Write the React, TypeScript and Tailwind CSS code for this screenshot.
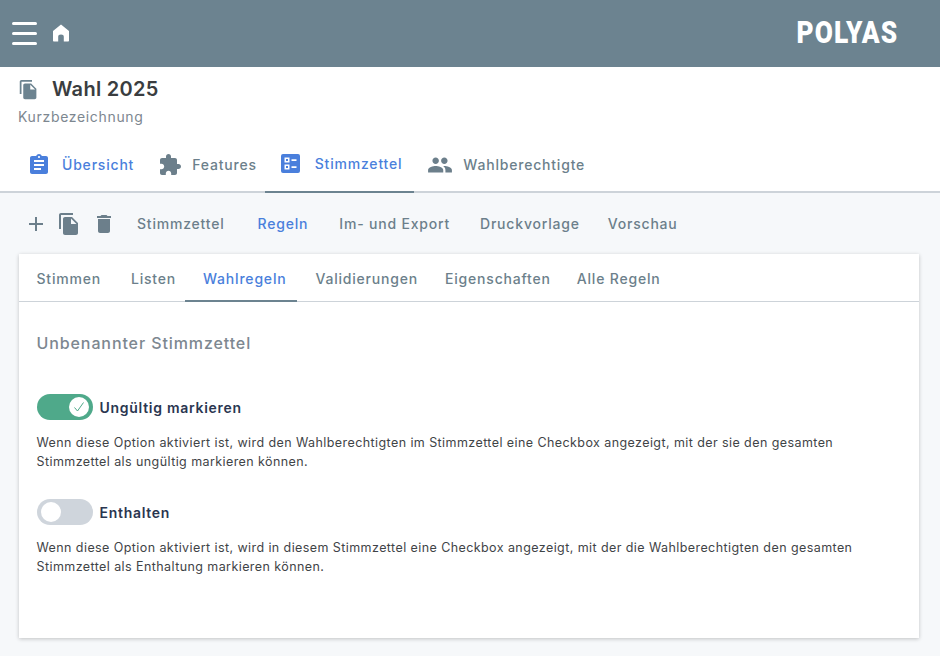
const F = "M16 1H4c-1.1 0-2 .9-2 2v14h2V3h12V1zm-1 4l6 6v10c0 1.1-.9 2-2 2H7.99C6.89 23 6 22.1 6 21l.01-14c0-1.1.89-2 1.99-2h7zm-1 7h5.5L14 6.5V12z";

function I({ d, className }: { d: string; className: string }) {
  return (
    <svg viewBox="0 0 24 24" fill="currentColor" className={className}>
      <path d={d} />
    </svg>
  );
}

function Toggle({ on }: { on: boolean }) {
  return (
    <div className={`flex h-[26px] w-[56px] items-center rounded-full px-[4px] ${on ? "justify-end bg-[#4fa98a]" : "justify-start bg-[#cfd5dc]"}`}>
      <div className="flex h-[20px] w-[20px] items-center justify-center rounded-full bg-white">
        {on && (
          <svg viewBox="0 0 20 20" className="h-[20px] w-[20px]" fill="none" stroke="#4fa98a" strokeWidth="1">
            <path d="M5.5 10.5l3 3.5 6-8.5" />
          </svg>
        )}
      </div>
    </div>
  );
}

function Opt({ on, label, text }: { on: boolean; label: string; text: string }) {
  return (
    <div>
      <div className="flex items-center gap-[7px]">
        <Toggle on={on} />
        <span className="text-[14px] font-semibold tracking-[0.72px] text-[#2a3650]">{label}</span>
      </div>
      <p className="mt-[14px] w-[830px] text-[12.5px] leading-[18.5px] tracking-[0.42px] text-[#3f4447]">{text}</p>
    </div>
  );
}

export default function App() {
  return (
    <div className="flex h-[656px] w-[940px] flex-col overflow-hidden bg-[#f6f8fa] font-['Inter',sans-serif]">
      <header className="flex h-[67px] shrink-0 items-center justify-between bg-[#6c8390] pl-[12px] pr-[42px]">
        <div className="flex items-center gap-[15px]">
          <div className="flex w-[25px] flex-col gap-[7px]">
            <div className="h-[3px] rounded-full bg-white" />
            <div className="h-[3px] rounded-full bg-white" />
            <div className="h-[3px] rounded-full bg-white" />
          </div>
          <svg viewBox="0 0 18 18" fill="white" className="mb-[2px] h-[18px] w-[18px]">
            <path d="M9 .4L1 7v9.6c0 .6.5 1 1 1h4.200v-4.800c0-1.400 1-2.300 2.800-2.300s2.800.9 2.800 2.300v4.800H16c.5 0 1-.4 1-1V7z" />
          </svg>
        </div>
        <span className="mb-[3px] origin-right scale-x-[0.82] font-['Roboto',sans-serif] text-[32px] font-black tracking-[1.5px] text-white">POLYAS</span>
      </header>

      <section className="flex h-[126px] shrink-0 flex-col border-b-2 border-[#cdd3d9] bg-white">
        <div className="flex items-center gap-[13px] pl-[18px] pt-[10px]">
          <I d={F} className="h-[21px] w-[21px] text-[#6c8390]" />
          <h1 className="text-[20px] leading-[24px] font-semibold tracking-[0.3px] text-[#3a3d40]">Wahl 2025</h1>
        </div>
        <p className="pl-[18px] pt-[7px] text-[14px] leading-[18px] tracking-[0.67px] text-[#7d8790]">Kurzbezeichnung</p>
        <nav className="mt-[10px] flex h-[57px] shrink-0 items-stretch pl-[27px] text-[14px] font-medium tracking-[0.8px]">
          <div className="flex items-center gap-[11px] text-[#4a7fdc]">
            <I d="M19 3h-4.18C14.4 1.84 13.3 1 12 1c-1.3 0-2.4.84-2.82 2H5c-1.1 0-2 .9-2 2v14c0 1.1.9 2 2 2h14c1.1 0 2-.9 2-2V5c0-1.1-.9-2-2-2zm-7 0c.55 0 1 .45 1 1s-.45 1-1 1-1-.45-1-1 .45-1 1-1zm2 14H7v-2h7v2zm3-4H7v-2h10v2zm0-4H7V7h10v2z" className="h-[24px] w-[24px]" />
            Übersicht
          </div>
          <div className="ml-[24px] flex items-center gap-[10px] text-[#6c7f8b]">
            <I d="M20.5 11H19V7c0-1.1-.9-2-2-2h-4V3.5C13 2.12 11.88 1 10.5 1S8 2.12 8 3.5V5H4c-1.1 0-1.99.9-1.99 2v3.8H3.5c1.49 0 2.7 1.21 2.7 2.7s-1.21 2.7-2.7 2.7H2V20c0 1.1.9 2 2 2h3.8v-1.5c0-1.49 1.21-2.7 2.7-2.7 1.49 0 2.7 1.21 2.7 2.7V22H17c1.1 0 2-.9 2-2v-4h1.5c1.38 0 2.5-1.12 2.5-2.5S21.88 11 20.5 11z" className="h-[24px] w-[24px]" />
            Features
          </div>
          <div className="ml-[8px] flex items-center gap-[15px] border-b-2 border-[#6c8390] pl-[16px] pr-[12px] text-[#4a7fdc]">
            <svg viewBox="0 0 19 19" className="h-[19px] w-[19px]" fill="currentColor">
              <path fillRule="evenodd" d="M2 0h15a2 2 0 0 1 2 2v15a2 2 0 0 1-2 2H2a2 2 0 0 1-2-2V2a2 2 0 0 1 2-2zm1.500 3.500v5h5v-5h-5zM5 5h2v2H5V5zm5.500.2v1.800h5V5.200h-5zM3.500 10.500v5h5v-5h-5zM5 12h2v2H5v-2zm5.500.2V14h5v-1.800h-5z" />
            </svg>
            Stimmzettel
          </div>
          <div className="ml-[13px] flex items-center gap-[10px] text-[#6c7f8b]">
            <I d="M16 11c1.66 0 2.99-1.34 2.99-3S17.66 5 16 5c-1.66 0-3 1.34-3 3s1.34 3 3 3zm-8 0c1.66 0 2.99-1.34 2.99-3S9.66 5 8 5C6.34 5 5 6.34 5 8s1.34 3 3 3zm0 2c-2.33 0-7 1.17-7 3.5V19h14v-2.500c0-2.330-4.670-3.500-7-3.500zm8 0c-.29 0-.62.02-.97.05 1.160.84 1.970 1.970 1.970 3.450V19h6v-2.500c0-2.330-4.670-3.500-7-3.500z" className="h-[26px] w-[26px]" />
            Wahlberechtigte
          </div>
        </nav>
      </section>

      <div className="flex h-[61px] shrink-0 items-center pl-[26px] text-[14px] font-medium tracking-[0.8px] text-[#6c7f8b]">
        <svg viewBox="0 0 20 20" className="h-[20px] w-[20px]" fill="currentColor">
          <path d="M9 3h2v6h6v2h-6v6H9v-6H3V9h6z" />
        </svg>
        <I d={F} className="ml-[11px] h-[24px] w-[24px]" />
        <I d="M6 19c0 1.100.9 2 2 2h8c1.100 0 2-.9 2-2V7H6v12zM19 4h-3.500l-1-1h-5l-1 1H5v2h14V4z" className="ml-[11px] h-[24px] w-[24px]" />
        <span className="ml-[21px]">Stimmzettel</span>
        <span className="ml-[33px] text-[#4a7fdc]">Regeln</span>
        <span className="ml-[31px]">Im- und Export</span>
        <span className="ml-[30px]">Druckvorlage</span>
        <span className="ml-[28px]">Vorschau</span>
      </div>

      <main className="ml-[19px] h-[384px] w-[900px] bg-white shadow-[0_1px_4px_rgba(0,0,0,0.22)]">
        <div className="flex h-[48px] items-stretch border-b border-[#cdd3d9] pl-[17.5px] text-[14px] font-medium tracking-[0.8px] text-[#6c7f8b]">
          <span className="flex items-center pt-[2px]">Stimmen</span>
          <span className="ml-[30px] flex items-center pt-[2px]">Listen</span>
          <span className="ml-[9px] -mb-px flex items-center border-b-2 border-[#6c8390] pl-[18px] pr-[11px] pt-[2px] text-[#4a7fdc]">Wahlregeln</span>
          <span className="ml-[18px] flex items-center pt-[2px]">Validierungen</span>
          <span className="ml-[27px] flex items-center pt-[2px]">Eigenschaften</span>
          <span className="ml-[26px] flex items-center pt-[2px]">Alle Regeln</span>
        </div>
        <div className="px-[17.5px]">
          <h2 className="mt-[31px] text-[16px] leading-[20px] font-medium tracking-[0.9px] text-[#7d8790]">Unbenannter Stimmzettel</h2>
          <div className="mt-[41px] flex flex-col gap-[28px]">
            <Opt on label="Ungültig markieren" text="Wenn diese Option aktiviert ist, wird den Wahlberechtigten im Stimmzettel eine Checkbox angezeigt, mit der sie den gesamten Stimmzettel als ungültig markieren können." />
            <Opt on={false} label="Enthalten" text="Wenn diese Option aktiviert ist, wird in diesem Stimmzettel eine Checkbox angezeigt, mit der die Wahlberechtigten den gesamten Stimmzettel als Enthaltung markieren können." />
          </div>
        </div>
      </main>
    </div>
  );
}
